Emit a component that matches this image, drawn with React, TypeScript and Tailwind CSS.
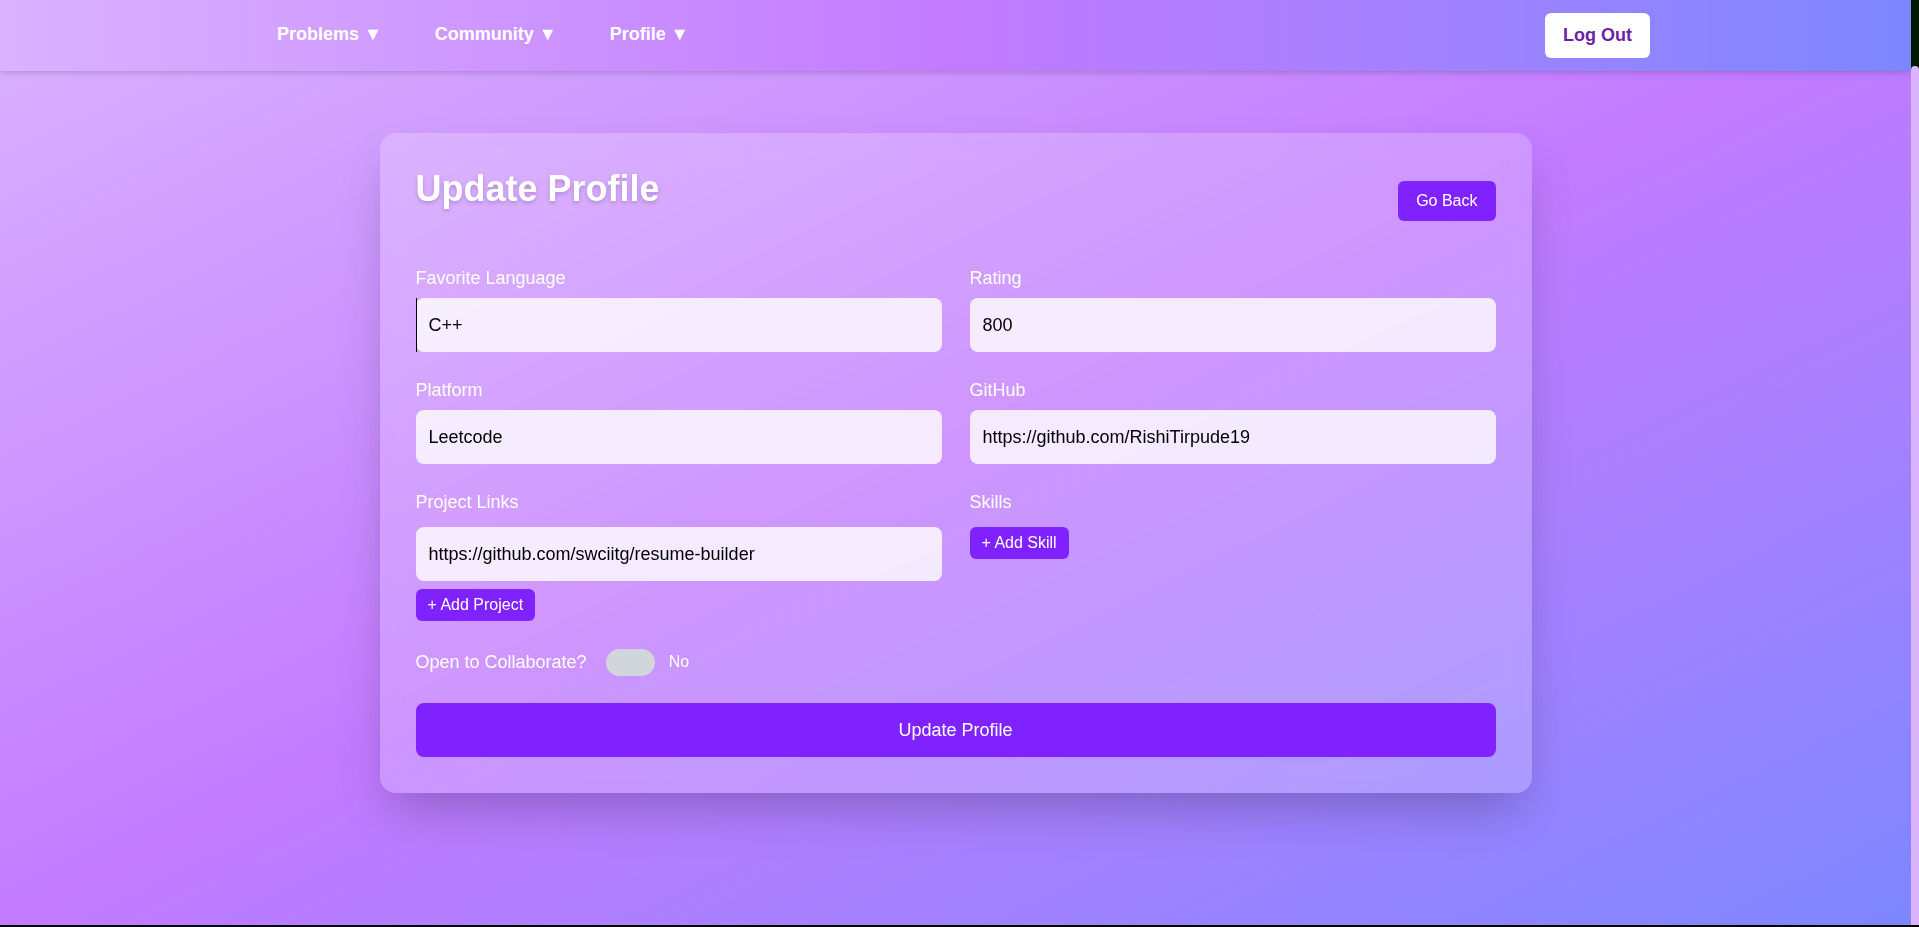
import { useState } from "react";

const fields = [
  { label: "Favorite Language", value: "C++", cursor: true },
  { label: "Rating", value: "800" },
  { label: "Platform", value: "Leetcode" },
  { label: "GitHub", value: "https://github.com/RishiTirpude19" },
];

const navItems = ["Problems", "Community", "Profile"];

function Navbar() {
  return (
    <nav className="relative z-10 flex h-[71px] items-center justify-between bg-linear-to-r from-purple-300 via-purple-400 to-indigo-400 px-[261px] shadow-md">
      <div className="flex items-center gap-[21px] pb-[3px]">
        {navItems.map((item) => (
          <button
            key={item}
            className="px-4 text-lg font-bold text-white"
          >
            {item} ▼
          </button>
        ))}
      </div>
      <button className="rounded-md bg-white px-[18px] py-3 text-lg leading-[21px] font-bold text-[#6b21a8]">
        Log Out
      </button>
    </nav>
  );
}

export default function App() {
  const [open, setOpen] = useState(false);

  return (
    <div className="flex h-[927px] flex-col bg-black font-['Liberation_Sans',Arial,sans-serif]">
      <div className="flex h-[925px]">
        <div className="relative flex-1 overflow-hidden bg-linear-to-br from-purple-300 via-purple-400 to-indigo-400">
          <Navbar />

          <main className="px-4 pt-[62px]">
            <div className="mx-auto max-w-6xl rounded-2xl bg-white/20 p-9 shadow-2xl backdrop-blur-md">
              {/* Header */}
              <div className="mb-[31px] flex items-center justify-between">
                <h2 className="mb-6 text-4xl font-bold text-white [text-shadow:0_2px_4px_rgba(0,0,0,0.2)]">
                  Update Profile
                </h2>
                <button className="rounded-md bg-violet-600 px-[18px] py-2 text-base text-white">
                  Go Back
                </button>
              </div>

              <form className="flex flex-col gap-[27px]" onSubmit={(e) => e.preventDefault()}>
                <div className="grid grid-cols-2 gap-x-7 gap-y-6">
                  {fields.map((f) => (
                    <div key={f.label}>
                      <label className="mb-1.5 block text-lg text-white">{f.label}</label>
                      <div className="relative">
                        <input
                          defaultValue={f.value}
                          className="w-full rounded-lg border border-transparent bg-white/80 px-3 py-3 text-lg leading-7 text-black outline-none"
                        />
                        {f.cursor && (
                          <span className="absolute top-0 bottom-0 left-0 w-px bg-black" />
                        )}
                      </div>
                    </div>
                  ))}

                  <div>
                    <label className="mb-[11px] block text-lg text-white">Project Links</label>
                    <input
                      defaultValue="https://github.com/swciitg/resume-builder"
                      className="w-full rounded-lg border border-transparent bg-white/80 px-3 py-3 text-lg leading-7 text-black outline-none"
                    />
                    <button
                      type="button"
                      className="mt-2 rounded-md bg-violet-600 px-3 py-1 text-base text-white"
                    >
                      + Add Project
                    </button>
                  </div>

                  <div>
                    <label className="mb-[11px] block text-lg text-white">Skills</label>
                    <button
                      type="button"
                      className="rounded-md bg-violet-600 px-3 py-1 text-base text-white"
                    >
                      + Add Skill
                    </button>
                  </div>
                </div>

                {/* Collaborate toggle */}
                <div className="flex h-7 items-center">
                  <span className="text-lg text-white">Open to Collaborate?</span>
                  <button
                    type="button"
                    onClick={() => setOpen(!open)}
                    className="ml-[19px] h-[27px] w-[49px] rounded-full bg-gray-300"
                  />
                  <span className="ml-[14px] text-base text-white">{open ? "Yes" : "No"}</span>
                </div>

                <button
                  type="submit"
                  className="h-[54px] w-full rounded-lg bg-violet-600 text-lg text-white"
                >
                  Update Profile
                </button>
              </form>
            </div>
          </main>
        </div>

        {/* scrollbar */}
        <div className="flex w-2 flex-col bg-[#001a00]">
          <div className="h-[66px]" />
          <div className="flex-1 rounded-t-full bg-[#dab4fd]" />
        </div>
      </div>
    </div>
  );
}
